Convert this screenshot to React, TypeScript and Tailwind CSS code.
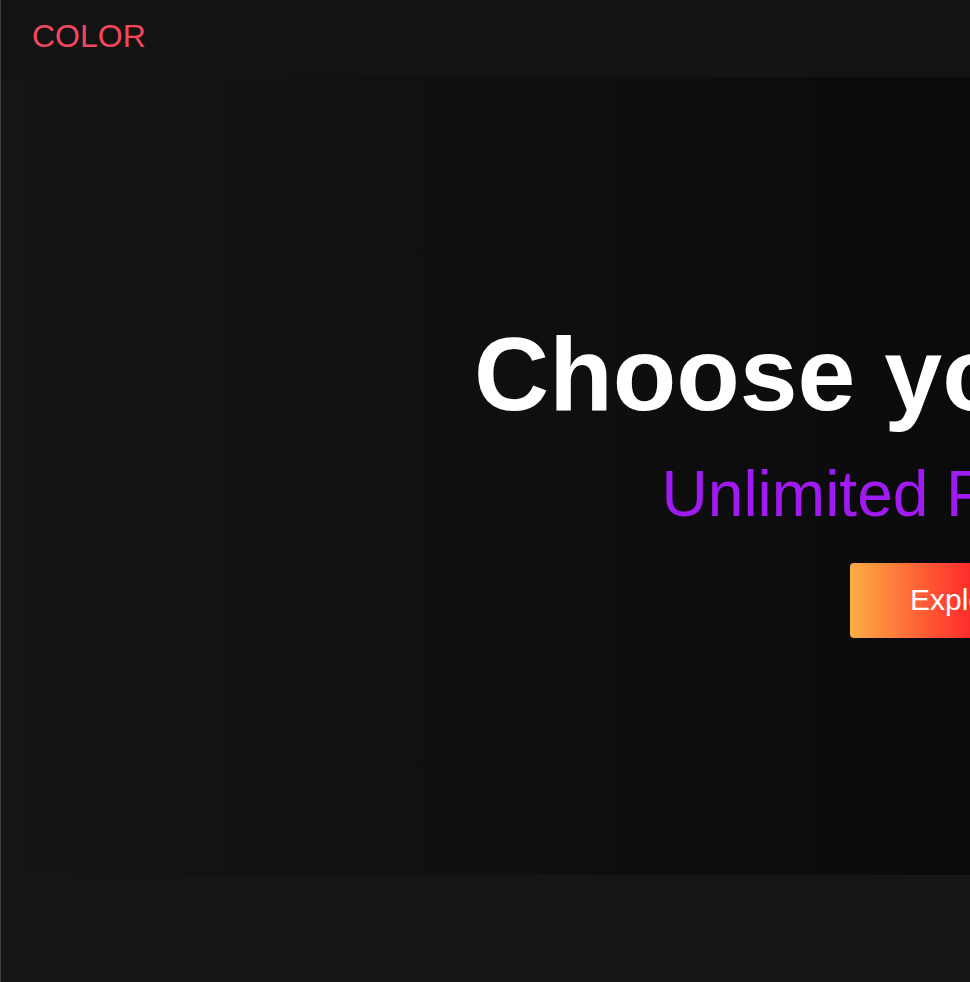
export default function App() {
  return (
    <div
      className="min-h-screen w-full overflow-hidden bg-[#141414] border-l border-[#3c3c3c]"
      style={{ fontFamily: '"Liberation Sans", Arial, sans-serif' }}
    >
      <div className="w-[1940px]">
        {/* Top bar */}
        <header className="h-[77px] px-[31px] pt-[18px] bg-[#131313]">
          <span className="text-[32px] leading-[normal] text-[#f2475c]">COLOR</span>
        </header>

        {/* Hero */}
        <section className="h-[798px] flex flex-col items-center justify-center bg-[linear-gradient(to_right,#151515,#000000)]">
          <h1 className="text-[104px] leading-[normal] font-bold text-white">Choose your Colors</h1>
          <p className="mt-[23px] text-[64px] leading-[normal] text-[#a01af3]">Unlimited Possibilities</p>
          <button className="mt-[32px] h-[75px] w-[242px] pl-[60px] text-left rounded-[4px] text-[30px] leading-[normal] text-white bg-[linear-gradient(to_right,#fdac45,#ff2a2a_50%,#ff1722)]">
            Explore
          </button>
        </section>

        <div className="h-[107px] bg-[#151515]" />
      </div>
    </div>
  );
}
